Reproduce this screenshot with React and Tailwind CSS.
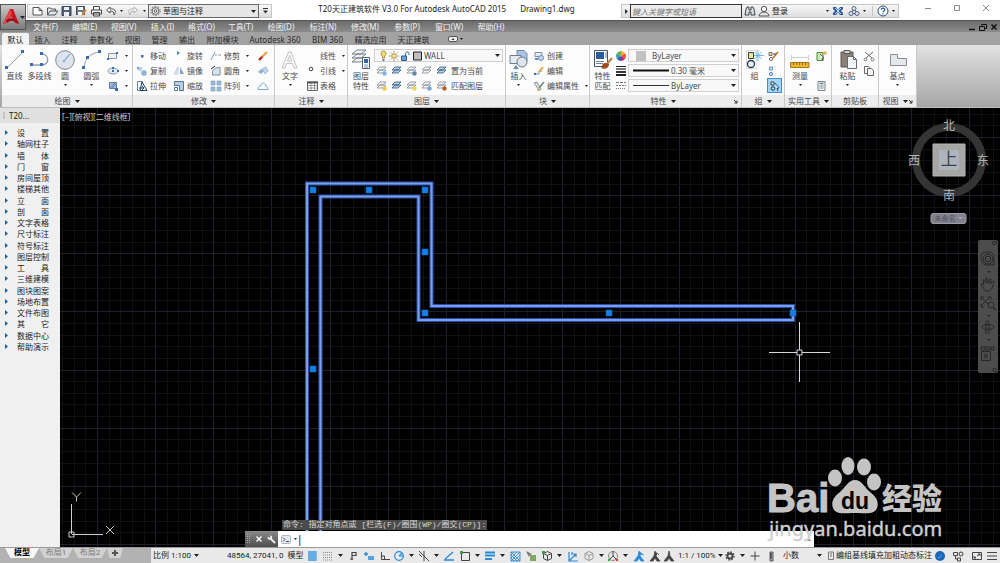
import React from "react";

/* ---------- small helpers ---------- */

function Svg({ w = 12, h = 12, children, className = "" }) {
  return (
    <svg
      width={w}
      height={h}
      viewBox={`0 0 ${w} ${h}`}
      fill="none"
      aria-hidden="true"
      className={`shrink-0 ${className}`}
    >
      {children}
    </svg>
  );
}

function Caret({ className = "text-[#222]" }) {
  return (
    <Svg w={5} h={3} className={className}>
      <path d="M0 0H5L2.5 3Z" fill="currentColor" />
    </Svg>
  );
}

function SmallCaret() {
  return (
    <Svg w={3} h={2} className="text-[#222]">
      <path d="M0 0H3L1.5 2Z" fill="currentColor" />
    </Svg>
  );
}

/* ---------- ribbon icons ---------- */

const node = "#3a6cab";

const icons = {
  line: (
    <Svg w={22} h={22}>
      <path d="M3 19L19 3" stroke="#8f9cab" />
      <path d="M1 17h3v3H1zM17 1h3v3h-3z" fill={node} />
    </Svg>
  ),
  polyline: (
    <Svg w={22} h={22}>
      <path d="M2 16H13C21 16 20 5 13 5" stroke="#8da0b5" strokeWidth="1.4" />
      <path d="M1 14h3v3H1zM11 14h3v3h-3zM11 3h3v3h-3z" fill={node} />
    </Svg>
  ),
  circle: (
    <Svg w={22} h={22}>
      <circle cx="11" cy="11" r="9.3" fill="#dfe4ec" stroke="#7e8894" />
      <path d="M10 12L16 5" stroke="#4e8fd0" />
      <circle cx="10" cy="12" r="1.3" fill="#7fb2e4" />
    </Svg>
  ),
  arc: (
    <Svg w={22} h={22}>
      <path d="M3 19C4 9 9 4 19 3" stroke="#8f9cab" />
      <path d="M1 17h3v3H1zM5 7h3v3H5zM17 1h3v3h-3z" fill={node} />
    </Svg>
  ),
  rect: (
    <Svg>
      <path d="M1.500 3.500h8v5h-8z" fill="#eef2f6" stroke="#8d99a6" />
      <path d="M9 2h2v2H9zM0 8h2v2H0z" fill={node} />
    </Svg>
  ),
  ellipse: (
    <Svg>
      <ellipse cx="6" cy="6" rx="5" ry="3" fill="#e3eaf2" stroke="#8d99a6" />
      <path d="M5 2h2v2H5zM5 5h2v2H5zM10 5h2v2h-2z" fill={node} />
    </Svg>
  ),
  hatch: (
    <Svg>
      <path d="M2.500 2.500h7v6h-7z" fill="#9db9db" stroke="#6480a2" />
      <path d="M3 8L8 3M5 8L9 4" stroke="#49688c" strokeWidth=".7" />
      <path d="M8 8h3v3H8z" fill={node} />
    </Svg>
  ),
  move: (
    <Svg>
      <path d="M5 5h2.500v2.500H5z" fill={node} />
    </Svg>
  ),
  copy: (
    <Svg>
      <circle cx="4" cy="4" r="2.300" fill="#bcd0e6" />
      <circle cx="8" cy="8" r="2.800" fill="#8fb3da" />
      <path d="M1 2h2v2H1z" fill="#7aa0cb" />
    </Svg>
  ),
  stretch: (
    <Svg>
      <path d="M1.500 1.500h5v9h-5z" fill="#fff" stroke="#5f7fa5" />
      <path d="M6 2L11 10.500H4Z" fill="#fff" stroke="#1f3f66" />
      <path d="M3 8h5M6 6l2 2-2 2" stroke="#1f3f66" />
    </Svg>
  ),
  rotate: (
    <Svg>
      <path d="M4 1l3 2-3 2z" fill="#4b83c2" />
    </Svg>
  ),
  mirror: (
    <Svg>
      <path d="M5 2V9H1Z" fill="#d6e2ef" stroke="#a9bfd6" strokeWidth=".6" />
      <path d="M7 2V9H11Z" fill="#7fa5cf" />
    </Svg>
  ),
  scale: (
    <Svg>
      <path d="M1.500 1.500h9v9h-4v-5h-5z" fill="#b9cde4" stroke="#4f75a3" />
      <path d="M1.500 7.500h3v3h-3z" fill="#fff" stroke="#4f75a3" />
    </Svg>
  ),
  trim: (
    <Svg>
      <path d="M1 10L5 2" stroke="#6d9acb" />
      <path d="M5 5h2M8 5h3" stroke="#8fa0b3" />
    </Svg>
  ),
  fillet: (
    <Svg>
      <path d="M2.500 10V8C2.500 4 5 2.500 10 2.500V10Z" fill="#dbe3ec" stroke="#7f8d9c" />
      <path d="M1 4L5 1" stroke="#333" />
    </Svg>
  ),
  array: (
    <Svg>
      <path d="M1 1h4v4H1zM7 1h4v4H7zM1 7h4v4H1zM7 7h4v4H7z" fill="#9bbbdc" stroke="#6c93bd" strokeWidth=".6" />
    </Svg>
  ),
  erase: (
    <Svg>
      <path d="M2 10L6 6" stroke="#a32b1e" strokeWidth="2.400" />
      <path d="M5 7L10 2" stroke="#e8a33b" strokeWidth="2" />
    </Svg>
  ),
  explode: (
    <Svg>
      <path d="M1 7L4 4L7 6L4 9Z" fill="#8fb1d8" />
      <path d="M5 4L9 2L11 6L8 9Z" fill="#c4d6ea" stroke="#7b9cc4" strokeWidth=".6" />
    </Svg>
  ),
  offset: (
    <Svg>
      <path d="M1 9.500H11C11 6.500 9.500 6 8.500 6C9 2 4 2 4 5.500C2 5.500 1 7 1 9.500Z" stroke="#7fa7d5" />
    </Svg>
  ),
  text: (
    <Svg w={20} h={22}>
      <path d="M2 19L8.500 3H11L17 19H14L12.500 14.500H6.500L5 19ZM7.500 12H11.700L9.600 6.500Z" fill="#fafafa" stroke="#b4b4b4" strokeWidth=".8" />
    </Svg>
  ),
  leader: (
    <Svg w={11}>
      <circle cx="4" cy="4" r="1.800" stroke="#444" />
    </Svg>
  ),
  table: (
    <Svg w={11}>
      <path d="M.5 2h10v8.500H.5z" fill="#fff" stroke="#666" />
      <path d="M0 2.500h11" stroke="#555" strokeWidth="2" />
      <path d="M.5 5.500h10M.5 8h10M4 3v8M7.500 3v8" stroke="#777" strokeWidth=".7" />
    </Svg>
  ),
  layerProps: (
    <Svg w={22} h={22}>
      <path d="M2 13L7 9H16L11 13ZM2 9L7 5H16L11 9ZM2 5L7 1H16L11 5Z" fill="#f3f3f3" stroke="#6b757f" strokeWidth=".9" />
      <path d="M12.500 8.500h7v11h-7z" fill="#fff" stroke="#48627e" />
      <path d="M14 10h4v4h-4z" fill="#2d67ab" />
      <path d="M14 16h4M14 18h4" stroke="#48627e" strokeWidth=".7" />
    </Svg>
  ),
  insert: (
    <Svg w={22} h={22}>
      <path d="M9 1.500h7l3 3V12H9z" fill="#a9c6e4" stroke="#6689ad" />
      <path d="M2 6.500h11v8H2z" fill="#e6eaee" stroke="#717e8c" />
      <circle cx="14" cy="13" r="5" fill="#dfe5ec" stroke="#6b7885" />
      <path d="M5 20l3-4 3 4z" fill="#6b8fb8" />
    </Svg>
  ),
  create: (
    <Svg>
      <path d="M2 2.500h7v4H2z" fill="#e7edf4" stroke="#7d8fa3" />
      <circle cx="8" cy="8" r="2.500" fill="#c9daec" stroke="#6d8db2" />
      <path d="M2 9h3" stroke="#2c62a8" strokeWidth="1.500" />
    </Svg>
  ),
  edit: (
    <Svg>
      <path d="M2 9h4V6h3" stroke="#6d8fb8" />
      <path d="M6 7L10 2" stroke="#e0a53a" strokeWidth="1.800" />
      <path d="M1 8h2v2H1z" fill={node} />
    </Svg>
  ),
  editAttr: (
    <Svg>
      <path d="M1 3l3-1 4 7-2 1z" fill="#dfe4ea" stroke="#6f7d8b" strokeWidth=".8" />
      <path d="M6 8L11 2" stroke="#6a8b72" strokeWidth="1.500" />
      <path d="M4 10h3" stroke="#dba23a" strokeWidth="1.500" />
    </Svg>
  ),
  matchProps: (
    <Svg w={22} h={22}>
      <path d="M2.500 1.500h13v16h-13z" fill="#fdfdfd" stroke="#45566a" />
      <path d="M4 3h8v7H4z" fill="#255f9f" />
      <path d="M13 4h2M13 6h2M13 8h2M4 12.500h8M4 14.500h7" stroke="#74849a" />
      <path d="M20 9L15 15" stroke="#b98044" strokeWidth="2" />
      <path d="M10 18C10 14 13 13 17 15C17 19 13 21 9 19Z" fill="#a04d1c" />
    </Svg>
  ),
  wheel: (
    <Svg>
      <path d="M6 6V1A5 5 0 0 1 10.300 3.500Z" fill="#f0b02c" />
      <path d="M6 6L10.300 3.500A5 5 0 0 1 10.300 8.500Z" fill="#e2522c" />
      <path d="M6 6L10.300 8.500A5 5 0 0 1 6 11Z" fill="#c22a6e" />
      <path d="M6 6V11A5 5 0 0 1 1.700 8.500Z" fill="#3358b8" />
      <path d="M6 6L1.700 8.500A5 5 0 0 1 1.700 3.500Z" fill="#2f9fae" />
      <path d="M6 6L1.700 3.500A5 5 0 0 1 6 1Z" fill="#62b548" />
    </Svg>
  ),
  weights: (
    <Svg>
      <path d="M1 1.500h10" stroke="#222" />
      <path d="M1 4h10" stroke="#222" strokeWidth="1.200" />
      <path d="M1 7h10" stroke="#222" strokeWidth="1.800" />
      <path d="M1 10h10" stroke="#222" strokeWidth="2" />
    </Svg>
  ),
  dashes: (
    <Svg>
      <path d="M1 2.500h10" stroke="#777" strokeDasharray="3 1" />
      <path d="M1 5.500h10" stroke="#777" strokeDasharray="2 1" />
      <path d="M1 8.500h10" stroke="#777" strokeDasharray="1 1" />
    </Svg>
  ),
  group: (
    <Svg w={20} h={22}>
      <path d="M1.500 1.500h10v18h-10z" stroke="#bbb" strokeDasharray="1 1" />
      <path d="M3.500 3.500h5v6h-5z" fill="#efe39b" stroke="#2c4b30" />
      <circle cx="6" cy="15" r="3.500" fill="#e9f0f7" stroke="#23384d" strokeWidth="1.300" />
      <path d="M13 1v11M9 6.500h10M9.500 3l7 7M16.500 3l-7 7" stroke="#5fb1e2" strokeWidth=".9" />
    </Svg>
  ),
  groupEdit: (
    <Svg>
      <path d="M2 2.500h3v3H2z" fill="#e8dc8e" stroke="#555" strokeWidth=".8" />
      <circle cx="4" cy="9" r="1.600" stroke="#444" strokeWidth=".8" />
      <path d="M6 8L11 2" stroke="#b9752d" strokeWidth="1.600" />
      <path d="M6 4h3" stroke="#444" />
    </Svg>
  ),
  ungroup: (
    <Svg>
      <path d="M2.500 2h3v3h-3z" fill="#d5e3f2" stroke="#4d7cb0" strokeWidth=".8" />
      <circle cx="4" cy="9" r="1.600" fill="#cfe0f2" stroke="#3168a8" strokeWidth=".8" />
      <path d="M8 2v3M8 8v3" stroke="#b6c7d9" strokeDasharray="1 1" />
    </Svg>
  ),
  groupSelect: (
    <Svg>
      <path d="M2 2h3v3H2z" fill="#dce8b0" stroke="#1f3b57" strokeWidth=".9" />
      <circle cx="4" cy="8.500" r="1.800" stroke="#1f3b57" />
      <path d="M6 3l4 5-2 .3L9 11" fill="#fff" stroke="#1f3b57" strokeWidth=".9" />
    </Svg>
  ),
  measure: (
    <Svg w={20} h={22}>
      <path d="M1.500 6v5M18.500 6v5M2 8.500h16" stroke="#c9d0d6" />
      <path d="M.5 13.500h18.500v5H.5z" fill="#f0b429" stroke="#a5761b" />
      <path d="M3.500 14v2M6.500 14v2M9.500 14v2M12.500 14v2M15.500 14v2" stroke="#7d5813" strokeWidth=".8" />
    </Svg>
  ),
  quickSelect: (
    <Svg>
      <path d="M2 2.500h6v8H2z" fill="#cfe6bd" stroke="#4b8a3d" />
      <path d="M5 4l4 4-2 .3L8 11" fill="#fff" stroke="#333" strokeWidth=".8" />
      <path d="M8 3h4M10 1v4" stroke="#e09a26" />
    </Svg>
  ),
  calc: (
    <Svg>
      <path d="M3 1.500h7v9H3z" fill="#f0f2f4" stroke="#7a848e" />
      <path d="M4.500 3.500h4" stroke="#7a848e" strokeWidth="1.500" />
      <path d="M4.500 6h4M4.500 8h4" stroke="#66717c" strokeDasharray="1 .5" />
    </Svg>
  ),
  paste: (
    <Svg w={20} h={22}>
      <path d="M3 3h12v15H3z" fill="#8c8074" stroke="#5b554f" />
      <path d="M6 1.500h6v3H6z" fill="#d6d6d6" stroke="#555" />
      <path d="M9.500 7.500h6l3 3v9h-9z" fill="#f2f4f7" stroke="#636b74" />
      <path d="M15.500 7.500v3h3" stroke="#636b74" />
    </Svg>
  ),
  cut: (
    <Svg>
      <path d="M2 2L9 8M10 2L3 8" stroke="#666" />
      <circle cx="2.500" cy="9.500" r="1.400" stroke="#777" />
      <circle cx="9.500" cy="9.500" r="1.400" stroke="#777" />
    </Svg>
  ),
  copyClip: (
    <Svg>
      <path d="M1.500 1.500h4l1 1v6h-5z" fill="#fff" stroke="#666" />
      <path d="M4.500 3.500h4l2 2v5h-6z" fill="#f3f5f7" stroke="#666" />
    </Svg>
  ),
  base: (
    <Svg w={20} h={22}>
      <path d="M2.500 5.500h7v4h9v7h-16z" fill="#e6e8ec" stroke="#858c94" />
    </Svg>
  ),
};

function LayerIcon({ accent, dark }) {
  return (
    <Svg>
      <path
        d="M1 8L4 5H10L7 8ZM1 5L4 2H10L7 5Z"
        fill={dark ? "#b9cde2" : "#f4f4f4"}
        stroke={dark ? "#34587f" : "#848e98"}
        strokeWidth=".8"
      />
      {accent && <circle cx="8.500" cy="8.500" r="2.200" fill={accent} />}
    </Svg>
  );
}

/* ---------- ribbon building blocks ---------- */

function Big({ icon, label, caret, className = "" }) {
  return (
    <button type="button" className={`flex shrink-0 flex-col items-center pt-[4px] ${className}`}>
      {icon}
      <span className="text-center leading-[10px] whitespace-pre">{label}</span>
      {caret && <span className="mt-[3px]"><SmallCaret /></span>}
    </button>
  );
}

function Item({ icon, label, caret, blank }) {
  return (
    <button type="button" aria-label={blank} className="flex h-[15px] items-center gap-[2px] whitespace-nowrap">
      {icon}
      {label && <span>{label}</span>}
      {caret && <span className="ml-[4px]"><SmallCaret /></span>}
    </button>
  );
}

function Col({ children, className = "" }) {
  return <div className={`flex shrink-0 flex-col items-start pt-[3px] ${className}`}>{children}</div>;
}

function Panel({ title, caret = true, launcher, className = "", children }) {
  return (
    <section className={`flex shrink-0 flex-col border-r border-[#c9c9c9] ${className}`}>
      <div className="flex h-[50px] overflow-hidden bg-[#fcfcfc]">{children}</div>
      <div className="flex h-[12px] items-center bg-[#ececec] px-[3px]">
        <button type="button" className="flex flex-1 items-center justify-center gap-[4px] whitespace-nowrap">
          {title}
          {caret && <Caret />}
        </button>
        {launcher && (
          <Svg w={5} h={5}>
            <path d="M1 1L4 4M4 1.500V4H1.500" stroke="#333" />
          </Svg>
        )}
      </div>
    </section>
  );
}

function Combo({ label, value, lead, className = "" }) {
  return (
    <div className={`flex items-center gap-[2px] border border-[#cfcfcf] bg-[#f8f8f8] pr-[2px] pl-[4px] ${className}`}>
      {lead}
      <select aria-label={label} className="min-w-0 flex-1 appearance-none bg-transparent leading-[10px] outline-none">
        <option>{value}</option>
      </select>
      <Caret />
    </div>
  );
}

/* ---------- title bar ---------- */

const quickTools = [
  ["新建", <path key="p" d="M2 2.500h6l3 3v4.500H2zM8 2.500v3h3" fill="#fff" stroke="#555" />],
  ["打开", <path key="p" d="M1.500 10V3h3l1 1h4v2M1.500 10L4 6h8L9 10Z" fill="#e3e9ef" stroke="#555" />],
  ["保存", <g key="p"><path d="M2 1.500h9v9H2z" fill="#4d6279" stroke="#33465a" /><path d="M4 2h5v3H4zM4 7h5v4H4z" fill="#eef" /></g>],
  ["另存为", <g key="p"><path d="M1.500 1.500h8v8h-8z" fill="#6d7c8c" stroke="#3c4a58" /><path d="M3 2h5v3H3zM3 7h4v3H3z" fill="#fff" /><path d="M7 10l4-5" stroke="#d6922c" strokeWidth="2" /></g>],
  ["打印", <g key="p"><path d="M3.500 5V1.500h6V5M1.500 5h10v4h-10zM3.500 7.500h6v3.500h-6z" fill="#f5f5f5" stroke="#444" /></g>],
  ["放弃", <path key="p" d="M5 2L1.500 5L5 8V6C8 6 9 7 9 10C12 6 10 3.500 5 4Z" fill="#f7f7f7" stroke="#444" strokeWidth=".9" />],
];

function TitleBar() {
  return (
    <header className="flex h-[20px] items-start pt-[4px] pl-[27px] text-[8px] text-[#222]">
      <div className="flex h-[14px] w-[245px] shrink-0 items-center border border-[#c6c6c6] bg-linear-to-b from-[#fafafa] to-[#dcdcdc] pl-[2px]">
        {quickTools.map(([name, art]) => (
          <button key={name} type="button" aria-label={name} className="flex w-[15px] justify-center">
            <Svg w={13} h={12}>{art}</Svg>
          </button>
        ))}
        <span className="flex w-[6px] justify-center"><SmallCaret /></span>
        <button type="button" aria-label="重做" className="flex w-[16px] justify-center">
          <Svg w={13} h={12}>
            <path d="M8 2L11.500 5L8 8V6C5 6 4 7 4 10C1 6 3 3.500 8 4Z" fill="#f3f3f3" stroke="#aaa" strokeWidth=".9" />
          </Svg>
        </button>
        <span className="flex w-[8px] justify-center"><SmallCaret /></span>
        <Combo
          label="工作空间"
          value="草图与注释"
          className="h-[14px] w-[113px] !border-[#666] !bg-[#e6e6e6] !pl-[1px]"
          lead={
            <Svg w={11} h={12}>
              <circle cx="5.500" cy="6" r="3.400" stroke="#666" />
              <circle cx="5.500" cy="6" r="4.600" stroke="#666" strokeDasharray="1.500 1.400" />
              <circle cx="5.500" cy="6" r="1.300" stroke="#666" />
            </Svg>
          }
        />
        <button type="button" aria-label="自定义快速访问工具栏" className="flex w-[12px] justify-center">
          <Svg w={5} h={6}><path d="M0 .5h5" stroke="#333" /><path d="M0 2.500H5L2.500 5.500Z" fill="#333" /></Svg>
        </button>
      </div>

      <h1 className="flex min-w-0 flex-1 justify-center gap-[14px] leading-[10px] whitespace-nowrap text-[#222]">
        <span>T20天正建筑软件 V3.0 For Autodesk AutoCAD 2015</span>
        <span>Drawing1.dwg</span>
      </h1>

      <div className="flex h-[14px] w-[278px] shrink-0 items-center border border-[#c6c6c6] bg-linear-to-b from-[#f6f6f6] to-[#dedede]">
        <button type="button" aria-label="展开搜索" className="flex w-[8px] justify-center">
          <Svg w={3} h={5}><path d="M0 0L3 2.500L0 5Z" fill="#333" /></Svg>
        </button>
        <input
          aria-label="搜索"
          placeholder="键入关键字或短语"
          className="h-[14px] w-[112px] border border-[#333] bg-[#ececec] px-px italic outline-none placeholder:text-[#777]"
        />
        <button type="button" aria-label="查找" className="flex w-[16px] justify-center">
          <Svg>
            <path d="M2 4l1-2h2v3h2V2h2l1 2 1 6H7V7H5v3H1z" fill="#ddd" stroke="#3c4650" />
          </Svg>
        </button>
        <button type="button" className="flex w-[68px] items-center gap-[2px]">
          <Svg w={12}>
            <circle cx="6" cy="4" r="2.700" fill="#f3f3f3" stroke="#555" />
            <path d="M1 11C1 8 4 7.500 6 7C8 7.500 11 8 11 11Z" fill="#e6e6e6" stroke="#555" />
          </Svg>
          登录
        </button>
        <SmallCaret />
        <button type="button" aria-label="Exchange" className="flex w-[18px] justify-center">
          <Svg>
            <path d="M1 2h3l2 3 2-3h3v2L9 6l2 2v2H8L6 7l-2 3H1V8l2-2-2-2z" fill="#2c5a9e" />
            <path d="M3 3l6 6M9 3L3 9" stroke="#dbe6f3" strokeWidth=".9" />
          </Svg>
        </button>
        <button type="button" aria-label="A360" className="flex w-[13px] justify-center">
          <Svg>
            <circle cx="6" cy="3.500" r="2" stroke="#4a5f86" />
            <circle cx="3" cy="8.500" r="2" stroke="#4a5f86" />
            <circle cx="9" cy="8.500" r="2" stroke="#4a5f86" />
            <path d="M5 5L4 7M7 5l1 2M5 8.500h2" stroke="#4a5f86" />
          </Svg>
        </button>
        <span className="flex w-[8px] justify-center"><SmallCaret /></span>
        <span className="ml-[4px] h-[10px] w-px bg-[#c4c4c4]" />
        <button type="button" aria-label="帮助" className="flex w-[19px] justify-center">
          <Svg>
            <circle cx="6" cy="6" r="5" fill="#fff" stroke="#2e4f7d" />
            <path d="M4.200 4.800C4.200 2.600 7.800 2.600 7.800 4.700C7.800 6 6 6 6 7.300M6 8.300v1.200" stroke="#1f57a5" strokeWidth="1.200" />
          </Svg>
        </button>
        <SmallCaret />
      </div>
      <div className="ml-[14px] flex w-[87px] shrink-0">
        <button type="button" aria-label="最小化" className="flex w-[29px] justify-center"><Svg w={8} h={8}><path d="M1 4.500h6" stroke="#8a8a8a" /></Svg></button>
        <button type="button" aria-label="最大化" className="flex w-[29px] justify-center"><Svg w={8} h={8}><path d="M1.500 1.500h5v5h-5z" stroke="#8a8a8a" /></Svg></button>
        <button type="button" aria-label="关闭" className="flex w-[29px] justify-center"><Svg w={8} h={8}><path d="M1 1L7 7M7 1L1 7" stroke="#8a8a8a" /></Svg></button>
      </div>
    </header>
  );
}

/* ---------- menu bar and ribbon tabs ---------- */

const menus = [
  "文件(F)", "编辑(E)", "视图(V)", "插入(I)", "格式(O)", "工具(T)",
  "绘图(D)", "标注(N)", "修改(M)", "参数(P)", "窗口(W)", "帮助(H)",
];

function MenuBar() {
  return (
    <nav className="flex h-[12px] items-center border-t border-[#555] bg-linear-to-b from-[#6c6c6c] to-[#8c8c8c] pl-[26px] text-[8px] leading-[10px] text-[#f2f2f2]">
      {menus.map((m, i) => (
        <button key={m} type="button" className={`whitespace-nowrap ${i < 6 ? "w-[39px]" : "w-[42px]"}`}>{m}</button>
      ))}
      <div className="ml-auto flex items-center gap-[3px] pr-[2px]">
        <Svg w={8} h={8}><path d="M1 6.500h6" stroke="#111" strokeWidth="1.500" /></Svg>
        <Svg w={8} h={8}><path d="M2.500 2.500v-1h5v4h-2M.5 3.500h5v4h-5z" stroke="#111" /></Svg>
        <Svg w={8} h={8}><path d="M1.500 1.500l5 5M6.500 1.500l-5 5" stroke="#111" strokeWidth="1.500" /></Svg>
      </div>
    </nav>
  );
}

const tabs = [
  ["插入", "w-[27px]"],
  ["注释", "w-[27px]"],
  ["参数化", "w-[36px]"],
  ["视图", "w-[27px]"],
  ["管理", "w-[27px]"],
  ["输出", "w-[28px]"],
  ["附加模块", "w-[43px]"],
  ["Autodesk 360", "w-[62px]"],
  ["BIM 360", "w-[43px]"],
  ["精选应用", "w-[43px]"],
  ["天正建筑", "w-[43px]"],
];

function RibbonTabs() {
  return (
    <div className="flex h-[13px] items-end bg-[#a2a2a2] pl-[2px] text-[8px] leading-[11px] text-[#2a2a2a]">
      <button type="button" className="h-[12px] w-[27px] rounded-t-[2px] bg-[#f3f3f3] text-[#111]">默认</button>
      {tabs.map(([name, w]) => (
        <button key={name} type="button" className={`h-[12px] whitespace-nowrap ${w}`}>{name}</button>
      ))}
      <button type="button" aria-label="最小化功能区" className="ml-[13px] flex h-[12px] items-center gap-[2px]">
        <Svg w={10} h={6}>
          <rect x=".5" y=".5" width="9" height="5" rx="1.500" fill="#eee" stroke="#555" />
          <path d="M3.500 4h3L5 2z" fill="#333" />
        </Svg>
        <SmallCaret />
      </button>
    </div>
  );
}

/* ---------- ribbon ---------- */

function Ribbon() {
  return (
    <div className="flex h-[63px] shrink-0 border-b border-[#bdbdbd] bg-linear-to-b from-[#e2e2e2] to-[#a6a6a6] pl-[2px] text-[8px] leading-[10px] text-[#4a4a4a]">
      <Panel title="绘图" className="w-[131px]">
        <Big icon={icons.line} label="直线" className="w-[25px]" />
        <Big icon={icons.polyline} label="多段线" className="w-[25px]" />
        <Big icon={icons.circle} label="圆" caret className="w-[26px]" />
        <Big icon={icons.arc} label="圆弧" caret className="w-[27px]" />
        <Col className="pl-[2px]">
          <Item blank="矩形" icon={icons.rect} caret />
          <Item blank="椭圆" icon={icons.ellipse} caret />
          <Item blank="图案填充" icon={icons.hatch} caret />
        </Col>
      </Panel>

      <Panel title="修改" className="w-[142px]">
        <Col className="w-[37px] pl-[3px]">
          <Item icon={icons.move} label="移动" />
          <Item icon={icons.copy} label="复制" />
          <Item icon={icons.stretch} label="拉伸" />
        </Col>
        <Col className="w-[37px] pl-[3px]">
          <Item icon={icons.rotate} label="旋转" />
          <Item icon={icons.mirror} label="镜像" />
          <Item icon={icons.scale} label="缩放" />
        </Col>
        <Col className="w-[46px] pl-[3px]">
          <Item icon={icons.trim} label="修剪" caret />
          <Item icon={icons.fillet} label="圆角" caret />
          <Item icon={icons.array} label="阵列" caret />
        </Col>
        <Col className="pl-[4px]">
          <Item blank="删除" icon={icons.erase} />
          <Item blank="分解" icon={icons.explode} />
          <Item blank="偏移" icon={icons.offset} />
        </Col>
      </Panel>

      <Panel title="注释" className="w-[73px]">
        <Big icon={icons.text} label="文字" caret className="w-[30px]" />
        <Col className="pl-[2px]">
          <Item icon={<Svg w={11} />} label="线性" caret />
          <Item icon={icons.leader} label="引线" caret />
          <Item icon={icons.table} label="表格" />
        </Col>
      </Panel>

      <Panel title="图层" className="w-[158px]">
        <Big icon={icons.layerProps} label={"图层\n特性"} className="w-[26px]" />
        <Col>
          <Combo
            label="图层"
            value="WALL"
            className="mt-[1px] mb-[1px] h-[13px] w-[129px]"
            lead={
              <Svg w={43} h={12}>
                <path d="M3.500 8V6.500C1 4 2 1 4.500 1C7 1 8 4 5.500 6.500V8Z" fill="#f7dc6a" stroke="#8a7430" strokeWidth=".8" />
                <path d="M3.500 10h2" stroke="#555" strokeWidth="1.500" />
                <circle cx="15" cy="6" r="2.300" fill="#f9e9a4" stroke="#8a7430" strokeWidth=".8" />
                <path d="M15 1v1.500M15 9.500V11M10 6h1.500M18.500 6H20M11.500 2.500l1 1M17.500 8.500l1 1M18.500 2.500l-1 1M12.500 8.500l-1 1" stroke="#8a7430" strokeWidth=".8" />
                <path d="M22.500 6h5v4.500h-5z" fill="#6fa3d8" stroke="#2d5f96" />
                <path d="M26.500 6V3.500C26.500 1.500 30 1.500 30 3.500V5" stroke="#2d5f96" />
                <path d="M34.500 2h8v8h-8z" fill="#bfbfbf" stroke="#222" />
              </Svg>
            }
          />
          <div className="flex h-[15px] items-center gap-[3px] pl-[2px]">
            <LayerIcon accent="#7fb4e6" />
            <LayerIcon dark />
            <LayerIcon accent="#5f86b0" />
            <LayerIcon />
            <LayerIcon dark />
            <button type="button" className="whitespace-nowrap">置为当前</button>
          </div>
          <div className="flex h-[15px] items-center gap-[3px] pl-[2px]">
            <LayerIcon accent="#f0c845" />
            <LayerIcon dark />
            <LayerIcon accent="#f3d447" />
            <LayerIcon accent="#78a6d8" />
            <LayerIcon accent="#b4652a" />
            <button type="button" className="whitespace-nowrap">匹配图层</button>
          </div>
        </Col>
      </Panel>

      <Panel title="块" className="w-[84px]">
        <Big icon={icons.insert} label="插入" caret className="w-[25px]" />
        <Col className="pl-[2px]">
          <Item icon={icons.create} label="创建" />
          <Item icon={icons.edit} label="编辑" />
          <Item icon={icons.editAttr} label="编辑属性" caret />
        </Col>
      </Panel>

      <Panel title="特性" launcher className="w-[152px]">
        <Big icon={icons.matchProps} label={"特性\n匹配"} className="w-[25px]" />
        <Col className="w-[13px]">
          <Item blank="颜色" icon={icons.wheel} />
          <Item blank="线宽" icon={icons.weights} />
          <Item blank="线型" icon={icons.dashes} />
        </Col>
        <Col className="gap-[2px] pt-[4px]">
          <Combo
            label="对象颜色"
            value="ByLayer"
            className="h-[13px] w-[111px]"
            lead={<Svg w={17} h={10}><path d="M3 0h10v10H3z" fill="#c2c2c2" /></Svg>}
          />
          <Combo
            label="线宽"
            value="0.30 毫米"
            className="h-[13px] w-[111px]"
            lead={<Svg w={36} h={3}><path d="M0 1.500h36" stroke="#111" strokeWidth="2" /></Svg>}
          />
          <Combo
            label="线型"
            value="ByLayer"
            className="h-[13px] w-[111px]"
            lead={<Svg w={36} h={3}><path d="M0 1.500h36" stroke="#333" /></Svg>}
          />
        </Col>
      </Panel>

      <Panel title="组" className="w-[43px]">
        <Big icon={icons.group} label="组" className="w-[25px]" />
        <Col className="items-center">
          <Item blank="组编辑" icon={icons.groupEdit} />
          <Item blank="解除编组" icon={icons.ungroup} />
          <button type="button" aria-label="启用组选择" className="flex h-[15px] w-[15px] items-center justify-center border border-[#3f8fce] bg-[#a6d3f5]">
            {icons.groupSelect}
          </button>
        </Col>
      </Panel>

      <Panel title="实用工具" className="w-[47px]">
        <Big icon={icons.measure} label="测量" caret className="w-[30px]" />
        <Col>
          <Item blank="快速选择" icon={icons.quickSelect} />
          <div className="h-[15px]" />
          <Item blank="计算器" icon={icons.calc} />
        </Col>
      </Panel>

      <Panel title="剪贴板" caret={false} className="w-[47px]">
        <Big icon={icons.paste} label="粘贴" caret className="w-[31px]" />
        <Col>
          <Item blank="剪切" icon={icons.cut} />
          <Item blank="复制到剪贴板" icon={icons.copyClip} />
        </Col>
      </Panel>

      <Panel title="视图" launcher className="w-[38px]">
        <Big icon={icons.base} label="基点" caret className="w-[37px]" />
      </Panel>
    </div>
  );
}

/* ---------- tool palette ---------- */

const palette = [
  "设　　置", "轴网柱子", "墙　　体", "门　　窗", "房间屋顶",
  "楼梯其他", "立　　面", "剖　　面", "文字表格", "尺寸标注",
  "符号标注", "图层控制", "工　　具", "三维建模", "图块图案",
  "场地布置", "文件布图", "其　　它", "数据中心", "帮助演示",
];

function Palette() {
  return (
    <aside className="w-[60px] shrink-0 bg-[#f0f0f0] text-[8px] text-[#222]">
      <div className="flex h-[15px] items-center gap-[4px] bg-[#e0e0e0] pl-[3px]">
        <span className="h-[7px] w-[2px] bg-[#c4c4c4]" />
        T20...
      </div>
      <ul className="mt-[4px] flex h-[225px] flex-col">
        {palette.map((name) => (
          <li key={name} className="flex flex-1 items-center">
            <button type="button" className="flex items-center gap-[9px] pl-[5px] leading-[11px] whitespace-nowrap">
              <Svg w={3} h={5}><path d="M0 0L3 2.500L0 5Z" fill="#1d5f9f" /></Svg>
              {name}
            </button>
          </li>
        ))}
      </ul>
    </aside>
  );
}

/* ---------- drawing area ---------- */

const step = 11.63;
const columns = Array.from({ length: 180 }, (_, i) => i - 3);
const rows = Array.from({ length: 100 }, (_, i) => i - 2);
const wall = "M247 450V75.500H371.500V198H733V212H358.500V88.500H260.500V450";
const grips = [[253, 82], [309, 82], [365, 82], [365, 144], [365, 205], [549, 205], [733, 205], [253, 261]];

function Drawing() {
  return (
    <svg className="absolute inset-0 h-full w-full" fill="none" aria-label="图形">
      <g shapeRendering="crispEdges">
        {columns.map((i) => (
          <path key={`c${i}`} d={`M${Math.round(37 + i * step)}.5 0V2000`} stroke={i % 5 === 0 ? "#20202c" : "#101016"} />
        ))}
        {rows.map((i) => (
          <path key={`r${i}`} d={`M0 ${Math.round(29 + i * step)}.5H3000`} stroke={i % 5 === 0 ? "#20202c" : "#101016"} />
        ))}
      </g>
      <path d={wall} stroke="#2750aa" strokeWidth="4" />
      <path d={wall} stroke="#7c9ee6" strokeWidth="2" />
      {grips.map(([x, y]) => (
        <rect key={`${x}-${y}`} x={x - 3} y={y - 3} width="6" height="6" fill="#1280ea" stroke="#1b62a8" strokeWidth=".6" />
      ))}
      <path d="M709 244.500H737M742 244.500H770M739.500 214V242M739.500 247V274M737 242h5v5h-5z" stroke="#d8d8d8" />
      <path d="M11.500 396V426M12 426.500H43M9 424h5v5h-5z" stroke="#d0d0d0" />
      <path d="M12 384.500L16.500 389L21 384.500M16.500 389V393.500M46 418L54 426M54 418L46 426" stroke="#c4c4c4" />
    </svg>
  );
}

function ViewControls() {
  return (
    <div className="absolute top-[3px] left-[2px] flex text-[8px] leading-[11px] whitespace-nowrap text-[#c8c8c8]">
      <button type="button">[−]</button>
      <button type="button">[俯视]</button>
      <button type="button">[二维线框]</button>
    </div>
  );
}

function Compass() {
  return (
    <svg width="100" height="120" viewBox="0 0 100 120" className="absolute top-0 right-0 font-['Noto_Sans_CJK_SC',sans-serif]" fill="none">
      <circle cx="49" cy="52" r="33" stroke="#343434" strokeWidth="8" />
      <path d="M33 36h32v32H33z" fill="#a6a6a4" stroke="#b4b4b4" />
      <path d="M39 42h20v20H39z" fill="#aeb4bc" />
      <g textAnchor="middle" fontSize="12" fill="#b4b4b4">
        <text x="49" y="22">北</text>
        <text x="14" y="57">西</text>
        <text x="83" y="57">东</text>
        <text x="49" y="92">南</text>
      </g>
      <text x="49" y="57" textAnchor="middle" fontSize="17" fill="#3d4248" className="font-['Liberation_Serif','Noto_Sans_CJK_SC',serif]">上</text>
      <rect x="31" y="105.500" width="35" height="10" rx="2" fill="#82828e" stroke="#9a9aa4" />
      <text x="45" y="113" textAnchor="middle" fontSize="7" fill="#505058">未命名</text>
      <path d="M58 109h5l-2.500 2z" fill="#a9a9b2" />
    </svg>
  );
}

function NavBar() {
  return (
    <svg width="20" height="133" viewBox="0 0 20 133" className="absolute top-[132px] right-[2px]" fill="none" stroke="#272727">
      <rect width="20" height="133" rx="2" fill="#4c4c4c" stroke="none" />
      <circle cx="16.500" cy="3" r="1.800" />
      <path d="M3 16C3 13 6 12 10 12S16 14 16 18V25H8C4 24 3 21 3 16Z" />
      <circle cx="10" cy="19" r="5" />
      <circle cx="10" cy="19" r="2.800" />
      <path d="M9 31h4l-2 2zM9 75h4l-2 2zM9 99h4l-2 2z" fill="#272727" stroke="none" />
      <path d="M5 47L3 44C4 43 5 44 6 45L5 40C6 39 7 40 8 43V38C9 37 10 38 10 43L12 39C13 38 14 40 12 44L15 41C16 41 17 42 15 45C14 50 11 52 8 51C6 50 6 49 5 47Z" />
      <path d="M3 57L12 66M12 57L3 66M3 60V57H6M10 57h3v3M3 64v3h3" />
      <circle cx="13" cy="65" r="3" fill="#4c4c4c" />
      <path d="M15 67l3 3" strokeWidth="1.500" />
      <ellipse cx="10" cy="87" rx="6" ry="2.500" />
      <path d="M8 94V83C8 80 11 80 11 83V94" />
      <path d="M3 107h4v3H3zM8 107h4v3H8zM13 107h3v3h-3zM3.500 111.500h9v9h-9zM7 114v4l3-2z" />
      <circle cx="16.500" cy="130" r="1.800" />
    </svg>
  );
}

function CommandLine() {
  return (
    <div className="absolute bottom-0 left-[185px] w-[569px] max-w-full text-[8px]">
      <p className="ml-[37px] w-fit bg-[#4b4b4b] px-[1px] font-['Liberation_Mono','Noto_Sans_CJK_SC',monospace] leading-[10px] whitespace-nowrap text-[#d6d6d6]">
        命令: 指定对角点或 [栏选(F)/圈围(WP)/圈交(CP)]:
      </p>
      <div className="mt-[1px] flex h-[16px] bg-white">
        <div className="flex w-[33px] shrink-0 items-center gap-[5px] bg-linear-to-b from-[#8a8a8a] to-[#4e4e4e] pl-[2px]">
          <Svg w={4} h={10}><path d="M.5 0v10M2.500 0v10" stroke="#aaa" strokeDasharray="1 1" /></Svg>
          <Svg w={6} h={6}><path d="M.5 .5l5 5M5.500 .5l-5 5" stroke="#fff" strokeWidth="1.400" /></Svg>
          <Svg w={9} h={9}><path d="M3 3L8 8" stroke="#eee" strokeWidth="2" /><path d="M1 1.500L2.500 3L3.500 1.500L2.500 .5C5 0 5.500 2 5 3.500C4 5.500 1 5 .5 3Z" fill="#eee" /></Svg>
        </div>
        <label htmlFor="command" className="flex items-center gap-[3px] pl-[3px]">
          <Svg w={10} h={9}>
            <rect x=".5" y=".5" width="9" height="8" rx="1" fill="#e3e8f0" stroke="#aeb6c2" />
            <path d="M2 2.500L4 4.500L2 6.500M5 6.500h3" stroke="#47566b" />
          </Svg>
          <SmallCaret />
        </label>
        <input id="command" aria-label="命令行" defaultValue="|" className="min-w-0 flex-1 bg-transparent text-[10px] text-black outline-none" />
        <Svg w={6} h={5} className="mt-[6px] mr-px"><path d="M0 4h4L2 1z" fill="#888" /></Svg>
      </div>
    </div>
  );
}

function Watermark() {
  return (
    <svg width="190" height="92" viewBox="0 0 190 92" className="pointer-events-none absolute right-[45px] bottom-0" fill="#c4c4c4">
      <text x="2" y="57" fontSize="40" fontWeight="700" stroke="#c4c4c4" className="font-['Liberation_Sans',sans-serif]">Bai</text>
      <ellipse cx="70" cy="23" rx="7" ry="8.500" />
      <ellipse cx="83" cy="11" rx="6.500" ry="9" />
      <ellipse cx="99" cy="12" rx="7" ry="8.500" />
      <ellipse cx="109" cy="27" rx="7" ry="8.500" />
      <path d="M90 25C97 25 99 32 105 37C112 42 114 48 112 53C109 60 102 58 90 58C78 58 71 60 68 53C66 48 68 42 75 37C81 32 83 25 90 25Z" />
      <text x="90" y="54" fontSize="23" fontWeight="700" textAnchor="middle" fill="#000" className="font-['Liberation_Sans',sans-serif]">du</text>
      <text x="117" y="54" fontSize="30" fontWeight="900" className="font-['Noto_Sans_CJK_SC',sans-serif]">经验</text>
      <text x="4" y="81" fontSize="20" fill="#d0d0d0" stroke="#d0d0d0" strokeWidth=".4" className="font-['Noto_Sans',sans-serif]">jingyan.baidu.com</text>
    </svg>
  );
}

/* ---------- status bar ---------- */

const blue = "#2a8ad8";
const ink = "#444";

const statusTools = [
  ["显示栅格", "w-[16px]", <g key="i"><rect x="2" y="1" width="9" height="10" fill="#a9d3f3" /><path d="M2 2h9M2 4h9M2 6h9M2 8h9M2 10h9M3 1v10M5 1v10M7 1v10M9 1v10" stroke={blue} strokeWidth=".6" /></g>],
  ["捕捉模式", "w-[14px]", <path key="i" d="M2 2.500h9M2 5h9M2 7.500h9M2 10h9" stroke="#888" strokeDasharray="1 1" />],
  [null, "w-[12px]"],
  ["推断约束", "w-[14px]", <path key="i" d="M5 10V2.500h4v3H5M3 9h3" stroke={ink} strokeWidth="1.200" />],
  ["动态输入", "w-[18px]", <path key="i" d="M1 4h4M3 2v4M5 7h6M5 9h6" stroke={blue} strokeWidth="1.300" />],
  ["正交", "w-[14px]", <path key="i" d="M2.500 2v7.500H11M2.500 6h3v3" stroke={ink} />],
  ["极轴追踪", "w-[14px]", <g key="i" stroke={blue} strokeWidth="1.200"><circle cx="6" cy="6" r="4.300" /><path d="M6 6h5M6 6l3-3" /></g>],
  [null, "w-[11px]"],
  ["等轴测", "w-[14px]", <path key="i" d="M1 1l10 10M6 1v10M1 4l3 3" stroke={ink} />],
  [null, "w-[11px]"],
  ["对象捕捉追踪", "w-[14px]", <path key="i" d="M1 10h10M2 9L10 2" stroke={blue} strokeWidth="1.300" />],
  ["对象捕捉", "w-[17px]", <g key="i"><path d="M2.500 2.500h8v8h-8z" stroke={ink} /><path d="M1 1h3v3H1z" fill="#3c9a4a" /></g>],
  [null, "w-[9px]"],
  ["线宽", "w-[16px]", <path key="i" d="M1 2.500h10M1 5.500h10M1 9h7" stroke={blue} strokeWidth="1.800" />],
  [null, "w-[9px]"],
  ["透明度", "w-[16px]", <path key="i" d="M2 2h9v9H2zM2 5l3-3M2 8l6-6M2 11l9-9M5 11l6-6M8 11l3-3M2 8l3 3M2 5l6 6M2 2l9 9" stroke={blue} strokeWidth=".9" />],
  ["选择循环", "w-[16px]", <g key="i"><path d="M5 5h6v6H5z" fill="#7fa860" /><path d="M1 1l6 3-2 1-1 2z" fill="#777" /></g>],
  ["三维对象捕捉", "w-[16px]", <g key="i"><path d="M6.500 1.500l4 2v5l-4 2-4-2v-5zM2.500 3.500l4 2 4-2M6.500 5.500v5" stroke={ink} /><path d="M1 1h3v3H1z" fill="#3c9a4a" /></g>],
  [null, "w-[9px]"],
  ["动态 UCS", "w-[18px]", <path key="i" d="M2 2v9h9M2 11L9 4M6 4h3v3M5 2v3" stroke={blue} strokeWidth="1.200" />],
  ["选择过滤", "w-[14px]", <path key="i" d="M6 1.500l4 2v5l-4 2-4-2v-5zM2 3.500l4 2 4-2M6 5.500v5" stroke="#999" />],
  [null, "w-[10px]"],
  ["小控件", "w-[14px]", <g key="i"><circle cx="6" cy="6" r="4.500" stroke="#888" /><path d="M6 1v5l-4 4M6 6l4 4" stroke={ink} /><path d="M9 9h2v2H9z" fill="#d33" /><path d="M1 9h2v2H1z" fill="#3a3" /></g>],
  [null, "w-[11px]"],
  ["注释可见性", "w-[16px]", <path key="i" d="M6 1L5 6L1 11h3l2-3 2 3h3L7 6l1-2 3 1" fill={blue} stroke={blue} strokeWidth=".8" />],
  ["自动缩放", "w-[15px]", <path key="i" d="M6 1L5 6L1 11h3l2-3 2 3h3L7 6l1-3 2 2" fill={ink} stroke={ink} strokeWidth=".8" />],
  ["注释比例", "w-[14px]", <path key="i" d="M6 1L5 6L1 11h3l2-3 2 3h3L7 6z" fill={ink} stroke={ink} strokeWidth=".8" />],
];

const sheet = "h-[10px] whitespace-nowrap [clip-path:polygon(0_0,100%_0,84%_100%,16%_100%)]";

function StatusBar() {
  return (
    <footer className="flex h-[16px] shrink-0 border-t border-[#999] bg-[#e9e9e9] font-['Roboto','Noto_Sans_CJK_SC',sans-serif] text-[8px] leading-[10px] text-[#222]">
      <div className="flex w-[151px] shrink-0 items-start bg-[#b2b2b2] pl-[5px]">
        <button type="button" className={`w-[34px] bg-[#f7f7f7] font-bold text-black ${sheet}`}>模型</button>
        <button type="button" className={`w-[34px] bg-[#d2d2d2] text-[#777] ${sheet}`}>布局1</button>
        <button type="button" className={`w-[34px] bg-[#d2d2d2] text-[#777] ${sheet}`}>布局2</button>
        <button type="button" aria-label="新建布局" className={`flex w-[16px] items-center justify-center bg-[#d2d2d2] ${sheet}`}>
          <Svg w={6} h={6}><path d="M3 0v6M0 3h6" stroke="#555" strokeWidth="2" /></Svg>
        </button>
      </div>
      <div className="flex min-w-0 flex-1 items-center whitespace-nowrap">
        <button type="button" className="flex w-[76px] shrink-0 items-center gap-[3px] pl-[2px]">比例 1:100 <Caret /></button>
        <span className="w-[60px] shrink-0">48564, 27041, 0</span>
        <button type="button" className="w-[17px] shrink-0">模型</button>
        {statusTools.map(([name, w, art], i) =>
          name ? (
            <button key={name} type="button" aria-label={name} className={`flex shrink-0 justify-center ${w}`}><Svg>{art}</Svg></button>
          ) : (
            <span key={i} className={`flex shrink-0 justify-center ${w}`}><Caret /></span>
          )
        )}
        <button type="button" className="ml-[2px] flex w-[46px] shrink-0 items-center gap-[2px]">1:1 / 100% <Caret /></button>
        <Svg>
          <circle cx="6" cy="6" r="2.500" stroke={ink} strokeWidth="1.800" />
          <circle cx="6" cy="6" r="4" stroke={ink} strokeWidth="1.400" strokeDasharray="1.600 1.500" />
        </Svg>
        <span className="ml-[4px]"><Caret /></span>
        <Svg className="ml-[4px]"><path d="M6 1.500v9M1.500 6h9" stroke={ink} /></Svg>
        <Svg className="ml-[5px]"><path d="M4 2h3v9H4z" fill="#aaa" stroke={ink} strokeWidth=".8" /><path d="M4 4h2M4 6h2M4 8h2" stroke="#222" /></Svg>
        <button type="button" className="ml-[5px] flex w-[39px] shrink-0 items-center justify-between">小数 <Caret /></button>
        <Svg w={6} h={9} className="ml-auto"><path d="M.5 1h5v7.500h-5zM2 3h2M2 5h2" stroke="#777" /></Svg>
        <span className="ml-[2px] flex">
          {["编组", "基线", "填充", "加粗", "动态标注"].map((t) => (
            <button key={t} type="button">{t}</button>
          ))}
        </span>
        <Svg w={12} className="ml-[2px]"><circle cx="6" cy="6" r="5" fill="#1a66b8" /><path d="M4 7l1 1 3-3" stroke="#68a7e4" /></Svg>
        <Svg className="ml-[6px]"><path d="M1.500 2.500h4v3h-4zM5.500 8h3v3h-3zM3.500 6v3h2" stroke={ink} /><circle cx="9" cy="4" r="2" stroke={ink} /></Svg>
        <Svg className="ml-[7px]"><path d="M1.500 2.500h9v7h-9z" stroke={ink} /><path d="M6 6l3-2M9 6V4H7M3 8l2-1M3 6v2h2" stroke={ink} /></Svg>
        <Svg className="mr-[2px] ml-[3px]"><path d="M1 2.500h10M1 6h10M1 9.500h10" stroke={ink} /></Svg>
      </div>
    </footer>
  );
}

/* ---------- page ---------- */

export default function App() {
  return (
    <div className="flex min-h-screen flex-col overflow-hidden bg-white font-['Noto_Sans','Noto_Sans_CJK_SC',sans-serif]">
      <div className="relative shrink-0">
        <TitleBar />
        <MenuBar />
        <button
          type="button"
          aria-label="应用程序菜单"
          className="absolute top-[4px] left-0 flex h-[26px] w-[26px] items-center border border-[#555] bg-linear-to-b from-[#c9c9c9] to-[#7c7c7c] pl-[1px]"
        >
          <Svg w={18} h={20}>
            <path d="M8 2L1 17L6 15.500L9 9L13 16L17 17L11 2Z" fill="#c8161d" />
            <path d="M8 2L1 17L6 15.500L10 6Z" fill="#e8434a" />
            <path d="M4 13.500C8 10 12 11 16 15L17 17C12 13 8 13 5 16Z" fill="#9c0f15" />
          </Svg>
          <Caret />
        </button>
      </div>
      <RibbonTabs />
      <Ribbon />
      <div className="flex flex-1">
        <Palette />
        <main className="relative flex-1 overflow-hidden bg-black">
          <Drawing />
          <ViewControls />
          <Compass />
          <NavBar />
          <CommandLine />
          <Watermark />
        </main>
      </div>
      <StatusBar />
    </div>
  );
}
